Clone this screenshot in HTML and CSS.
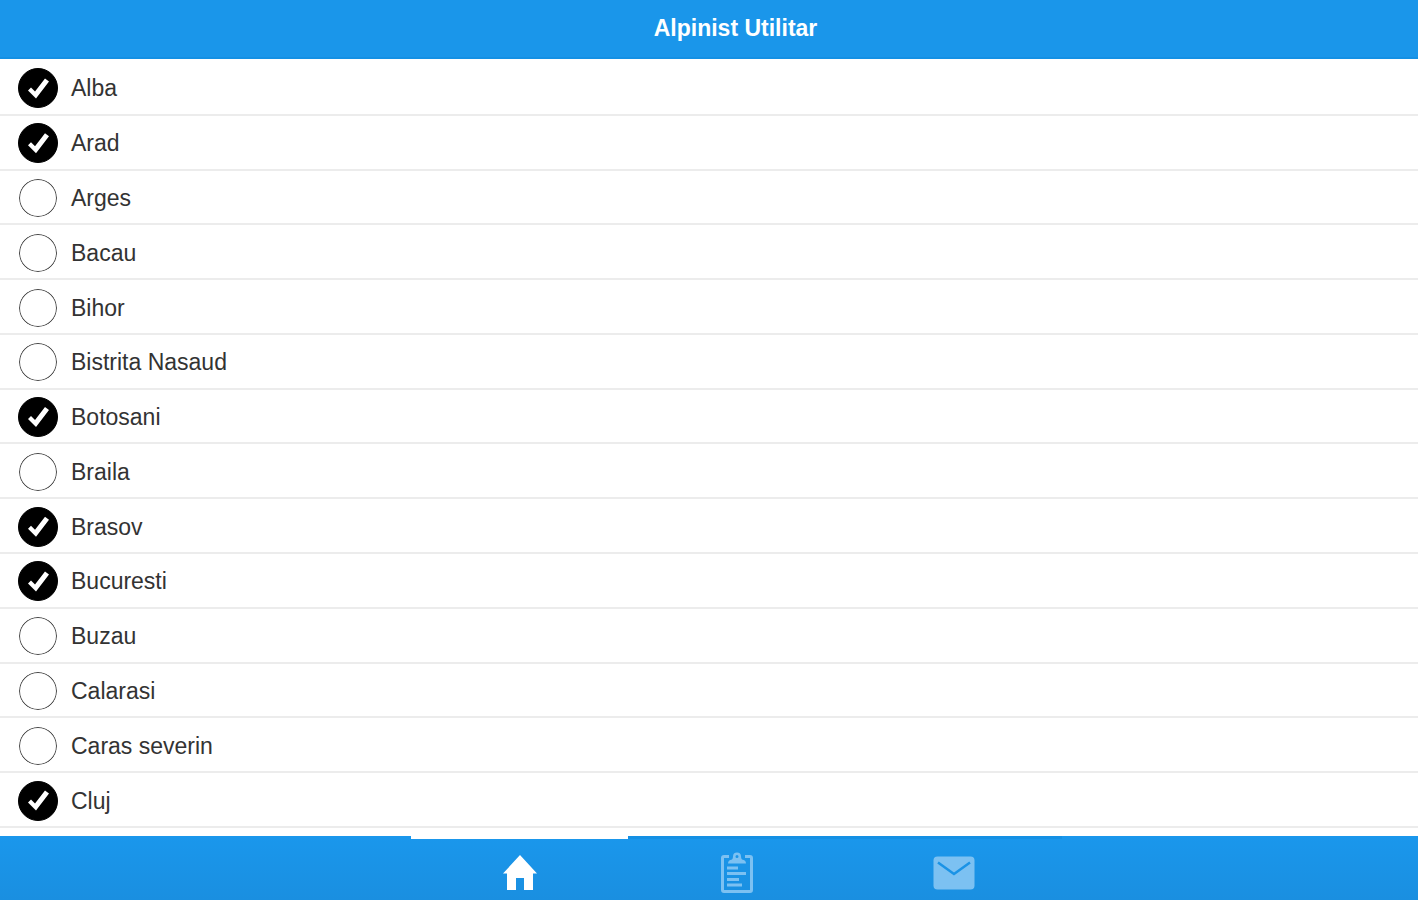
FILE: index.html
```html
<!DOCTYPE html>
<html lang="ro">
<head>
    <meta charset="UTF-8">
    <meta name="viewport" content="width=device-width, initial-scale=1.0">
    <title>Alpinist Utilitar</title>
    <link rel="stylesheet" href="styles.css">
</head>
<body>
    <header class="top-bar">
        <h1>Alpinist Utilitar</h1>
    </header>

    <main class="county-list">
        <label class="county"><input type="checkbox" checked><span>Alba</span></label>
        <label class="county"><input type="checkbox" checked><span>Arad</span></label>
        <label class="county"><input type="checkbox"><span>Arges</span></label>
        <label class="county"><input type="checkbox"><span>Bacau</span></label>
        <label class="county"><input type="checkbox"><span>Bihor</span></label>
        <label class="county"><input type="checkbox"><span>Bistrita Nasaud</span></label>
        <label class="county"><input type="checkbox" checked><span>Botosani</span></label>
        <label class="county"><input type="checkbox"><span>Braila</span></label>
        <label class="county"><input type="checkbox" checked><span>Brasov</span></label>
        <label class="county"><input type="checkbox" checked><span>Bucuresti</span></label>
        <label class="county"><input type="checkbox"><span>Buzau</span></label>
        <label class="county"><input type="checkbox"><span>Calarasi</span></label>
        <label class="county"><input type="checkbox"><span>Caras severin</span></label>
        <label class="county"><input type="checkbox" checked><span>Cluj</span></label>
    </main>

    <nav class="tab-bar">
        <a class="tab active" href="#home" aria-label="Home">
            <svg width="36" height="36" viewBox="0 0 36 36" fill="currentColor">
                <path d="M18 0L35 18.500H31V35H22V23H14V35H5V18.500H1Z"/>
            </svg>
        </a>
        <a class="tab" href="#jobs" aria-label="Jobs">
            <svg width="34" height="42" viewBox="0 0 34 42" fill="none" stroke="currentColor" stroke-width="3">
                <path d="M9 4.500H4Q2.500 4.500 2.500 6V38Q2.500 39.500 4 39.500H30Q31.500 39.500 31.500 38V6Q31.500 4.500 30 4.500H25"/>
                <path d="M7 16H18M7 21.500H26M7 27.500H19M7 33H22"/>
                <path fill="currentColor" fill-rule="evenodd" stroke="none" d="M8 11.500Q8 8 12 7.500Q13 6.500 13 4.500A4 4 0 0 1 21 4.500Q21 6.500 22 7.500Q26 8 26 11.500ZM17 3A1.500 1.500 0 1 0 17 6A1.500 1.500 0 0 0 17 3Z"/>
            </svg>
        </a>
        <a class="tab" href="#messages" aria-label="Messages">
            <svg width="42" height="34" viewBox="0 0 42 34">
                <rect x="0.500" y="0.500" width="41" height="33" rx="4" fill="currentColor"/>
                <path d="M5 6.500L21 18L37 6.500" fill="none" stroke="#1a93e6" stroke-width="2.500"/>
            </svg>
        </a>
    </nav>
</body>
</html>
```

FILE: styles.css
```css
* {
    box-sizing: border-box;
}

body {
    margin: 0;
    min-height: 100vh;
    display: flex;
    flex-direction: column;
    font-family: "Liberation Sans", Arial, sans-serif;
    background-color: #fff;
    color: #333;
}

.top-bar {
    height: 59px;
    display: flex;
    align-items: center;
    justify-content: center;
    padding: 0 0 2px 53px;
    background-color: #1a96ea;
    border-bottom: 2px solid #1490e4;
}

.top-bar h1 {
    margin: 0;
    font-size: 23px;
    line-height: 28px;
    color: #fff;
}

.county-list {
    flex: 1;
    display: flex;
    flex-direction: column;
    padding: 2px 0 8px;
}

.county {
    flex: 1 0 auto;
    display: flex;
    align-items: center;
    gap: 13px;
    padding: 2px 18px 0;
    border-bottom: 2px solid #ececec;
    font-size: 23px;
    line-height: 28px;
    cursor: pointer;
}

.county input {
    appearance: none;
    width: 40px;
    height: 40px;
    margin: 0;
    border: 1px solid #fff;
    border-radius: 50%;
    box-shadow: inset 0 0 0 1px #444;
    cursor: pointer;
}

.county input:checked {
    border-color: #000;
    background-color: #000;
    box-shadow: none;
}

/* tick */
.county input:checked::before {
    content: '';
    display: block;
    width: 38px;
    height: 38px;
    background-color: #fff;
    clip-path: polygon(9px 21px, 12px 18px, 16px 22px, 26px 9px, 30px 12px, 17px 29px);
}

.tab-bar {
    height: 64px;
    display: flex;
    padding-left: 29%;
    background: linear-gradient(#1a97ec, #1a8fe0);
}

.tab {
    width: 217px;
    display: flex;
    align-items: center;
    justify-content: center;
    padding-top: 7px;
    border-top: 3px solid #1490e4;
    color: #7cc1f2;
}

.tab.active {
    border-top-color: #fff;
    color: #fff;
}
```
